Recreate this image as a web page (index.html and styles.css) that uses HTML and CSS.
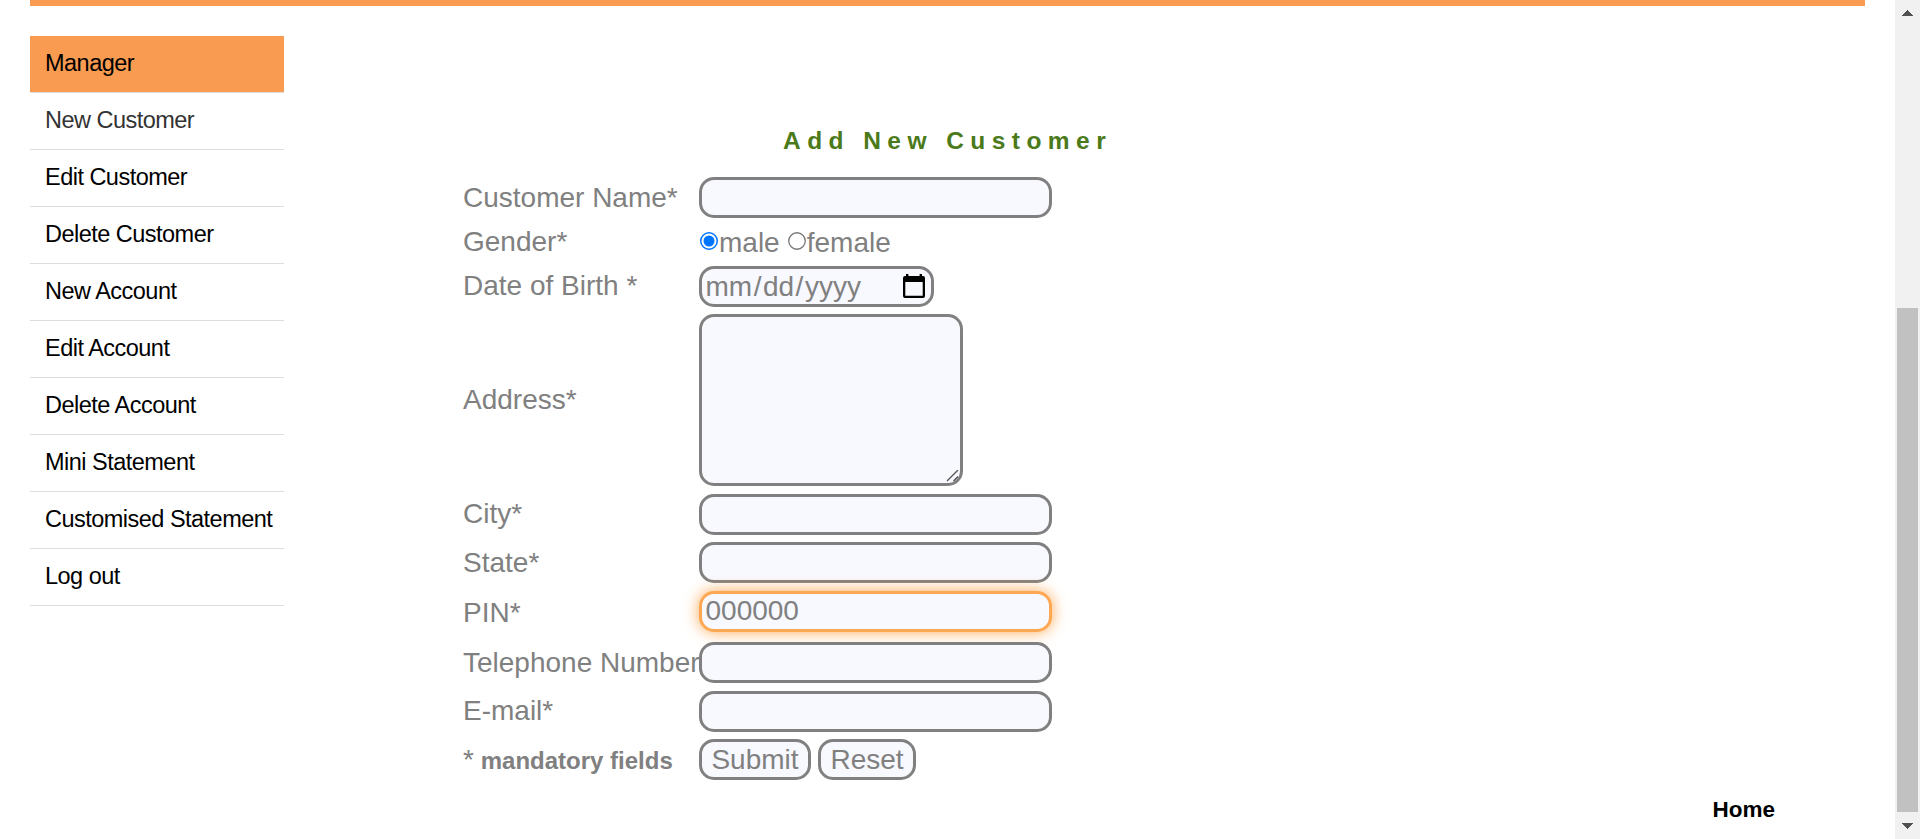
FILE: index.html
```
<!DOCTYPE html>
<html lang="en">
<head>
<meta charset="utf-8">
<title>Add New Customer</title>
<link rel="stylesheet" href="styles.css">
</head>
<body>
<div class="page">
  <div class="content">
    <div class="banner"></div>
    <div class="columns">
      <ul class="menu">
        <li class="active"><a>Manager</a></li>
        <li class="current"><a>New Customer</a></li>
        <li><a>Edit Customer</a></li>
        <li><a>Delete Customer</a></li>
        <li><a>New Account</a></li>
        <li><a>Edit Account</a></li>
        <li><a>Delete Account</a></li>
        <li><a>Mini Statement</a></li>
        <li><a>Customised Statement</a></li>
        <li><a>Log out</a></li>
      </ul>
      <form class="form">
        <h1 class="heading">Add New Customer</h1>
        <div class="row row-name"><label>Customer Name*</label><input class="field" type="text"></div>
        <div class="row row-gender"><label>Gender*</label>
          <div class="radios">
            <svg class="radio" viewBox="0 0 18 18"><circle cx="9" cy="9" r="8.25" fill="#fff" stroke="#0075ff" stroke-width="1.5"/><circle cx="9" cy="9" r="5.5" fill="#0075ff"/></svg><span class="male">male</span>
            <svg class="radio" viewBox="0 0 18 18"><circle cx="9" cy="9" r="8.25" fill="#fff" stroke="#767676" stroke-width="1.3"/></svg><span>female</span>
          </div>
        </div>
        <div class="row row-dob"><label>Date of Birth *</label>
          <div class="field date"><span>mm<i class="slash">/</i>dd<i class="slash">/</i>yyyy</span>
            <svg class="calendar" viewBox="0 0 22 24"><path fill="#000" fill-rule="evenodd" d="M3 0h2.4v2H16.6V0H19v2h1a2 2 0 0 1 2 2v18a2 2 0 0 1-2 2H2a2 2 0 0 1-2-2V4a2 2 0 0 1 2-2h1zM2.3 8v13.7h17.4V8z"/></svg>
          </div>
        </div>
        <div class="row row-address"><label>Address*</label>
          <div class="area"><textarea class="field"></textarea>
            <svg class="grip" viewBox="0 0 13 12"><path d="M1 11 12 0M7.5 11 12 6.5" stroke="#505050" stroke-width="1.3" fill="none"/></svg>
          </div>
        </div>
        <div class="row row-city"><label>City*</label><input class="field" type="text"></div>
        <div class="row row-state"><label>State*</label><input class="field" type="text"></div>
        <div class="row row-pin"><label>PIN*</label><input class="field focus" type="text" value="000000"></div>
        <div class="row row-phone"><label>Telephone Number</label><input class="field" type="text"></div>
        <div class="row row-mail"><label>E-mail*</label><input class="field" type="text"></div>
        <div class="row row-actions"><label>* <b>mandatory fields</b></label>
          <div class="actions"><button class="field" type="button">Submit</button><button class="field" type="button">Reset</button></div>
        </div>
      </form>
    </div>
    <div class="footer"><a>Home</a></div>
  </div>
  <div class="scrollbar">
    <svg class="arrow" viewBox="0 0 11 6" shape-rendering="crispEdges"><path d="M5.5 0 11 6H0z" fill="#505050"/></svg>
    <div class="thumb"></div>
    <svg class="arrow" viewBox="0 0 11 6" shape-rendering="crispEdges"><path d="M0 0h11L5.5 6z" fill="#505050"/></svg>
  </div>
</div>
</body>
</html>
```
FILE: styles.css
```
* { box-sizing: border-box; }

body {
  margin: 0;
  background: #fff;
  font-family: "Liberation Sans", Arial, sans-serif;
  overflow: hidden;
}

.page { display: flex; height: 839px; }
.content { flex: 1; padding: 0 30px; }
.banner { height: 6px; background: #f99b51; }
.columns { display: flex; height: 784px; padding-top: 30px; }

.menu {
  width: 254px;
  margin: 0;
  padding: 0;
  list-style: none;
  font-size: 23.5px;
  letter-spacing: -0.52px;
  color: #000;
}
.menu li {
  height: 57px;
  padding-left: 15px;
  border-bottom: 1px solid #ddd;
  line-height: 54px;
  white-space: nowrap;
}
.menu .active { background: #f99b51; background-clip: padding-box; }
.menu .current { color: #333; }

.form {
  margin-left: 179px;
  width: 965px;
  font-size: 28px;
  color: gray;
}
.heading {
  margin: 0;
  height: 141px;
  padding: 89px 0 0 320px;
  font-size: 24.5px;
  line-height: 31px;
  letter-spacing: 6.45px;
  color: #4b7a1a;
  white-space: nowrap;
}
.row { display: grid; grid-template-columns: 236px 1fr; align-items: start; }
.row label { line-height: 41px; white-space: nowrap; }
.row label b { margin-left: -1px; font-size: 24px; }

.row-name { height: 41px; }
.row-gender { height: 48px; }
.row-gender label { padding-top: 3px; }
.row-dob { height: 48px; }
.row-dob label, .row-city label, .row-mail label { margin-top: -1px; }
.row-address { height: 180px; }
.row-address label { padding-top: 65px; }
.row-city { height: 48px; }
.row-state { height: 49px; }
.row-pin { height: 51px; }
.row-pin label { margin-top: 1px; }
.row-phone { height: 49px; }
.row-mail { height: 48px; }
.row-actions { height: 41px; }

.field {
  width: 353px;
  height: 41px;
  margin: 0;
  padding: 0 3px 0 3.5px;
  border: 3px solid gray;
  border-radius: 15px;
  background: #f8f8ff;
  color: gray;
  font: 28px "Liberation Sans", Arial, sans-serif;
  outline: none;
}
.focus {
  padding-bottom: 2px;
  border-color: #ffa853;
  box-shadow: 0 0 15px #ffa853;
}

.radios { display: flex; padding: 4px 0 0 1px; line-height: 41px; }
.radio { width: 18px; height: 18px; margin: 10px 1px 0 0; }
.male { margin-right: 8px; }

.date { display: flex; align-items: center; justify-content: space-between; width: 235px; padding-right: 6px; }
.slash { margin: 0 1.5px; font-style: normal; }
.calendar { width: 22px; height: 24px; margin-bottom: 2px; }

.area { position: relative; width: 264px; height: 172px; }
.area .field { display: block; width: 264px; height: 172px; resize: none; }
.grip { position: absolute; right: 4px; bottom: 4px; width: 13px; height: 12px; }

.actions { display: flex; gap: 7px; }
.actions .field { width: 112px; padding: 0; }
.actions .field + .field { width: 98px; }

.footer { padding-right: 90px; text-align: right; font-size: 22.5px; font-weight: bold; line-height: 40px; color: #000; }

.scrollbar {
  display: flex;
  flex-direction: column;
  align-items: center;
  width: 25px;
  padding: 10px 0;
  background: #f1f1f1;
}
.arrow { width: 11px; height: 6px; }
.thumb { width: 21px; height: 504px; margin: 292px 0 11px; background: #c1c1c1; }
```
